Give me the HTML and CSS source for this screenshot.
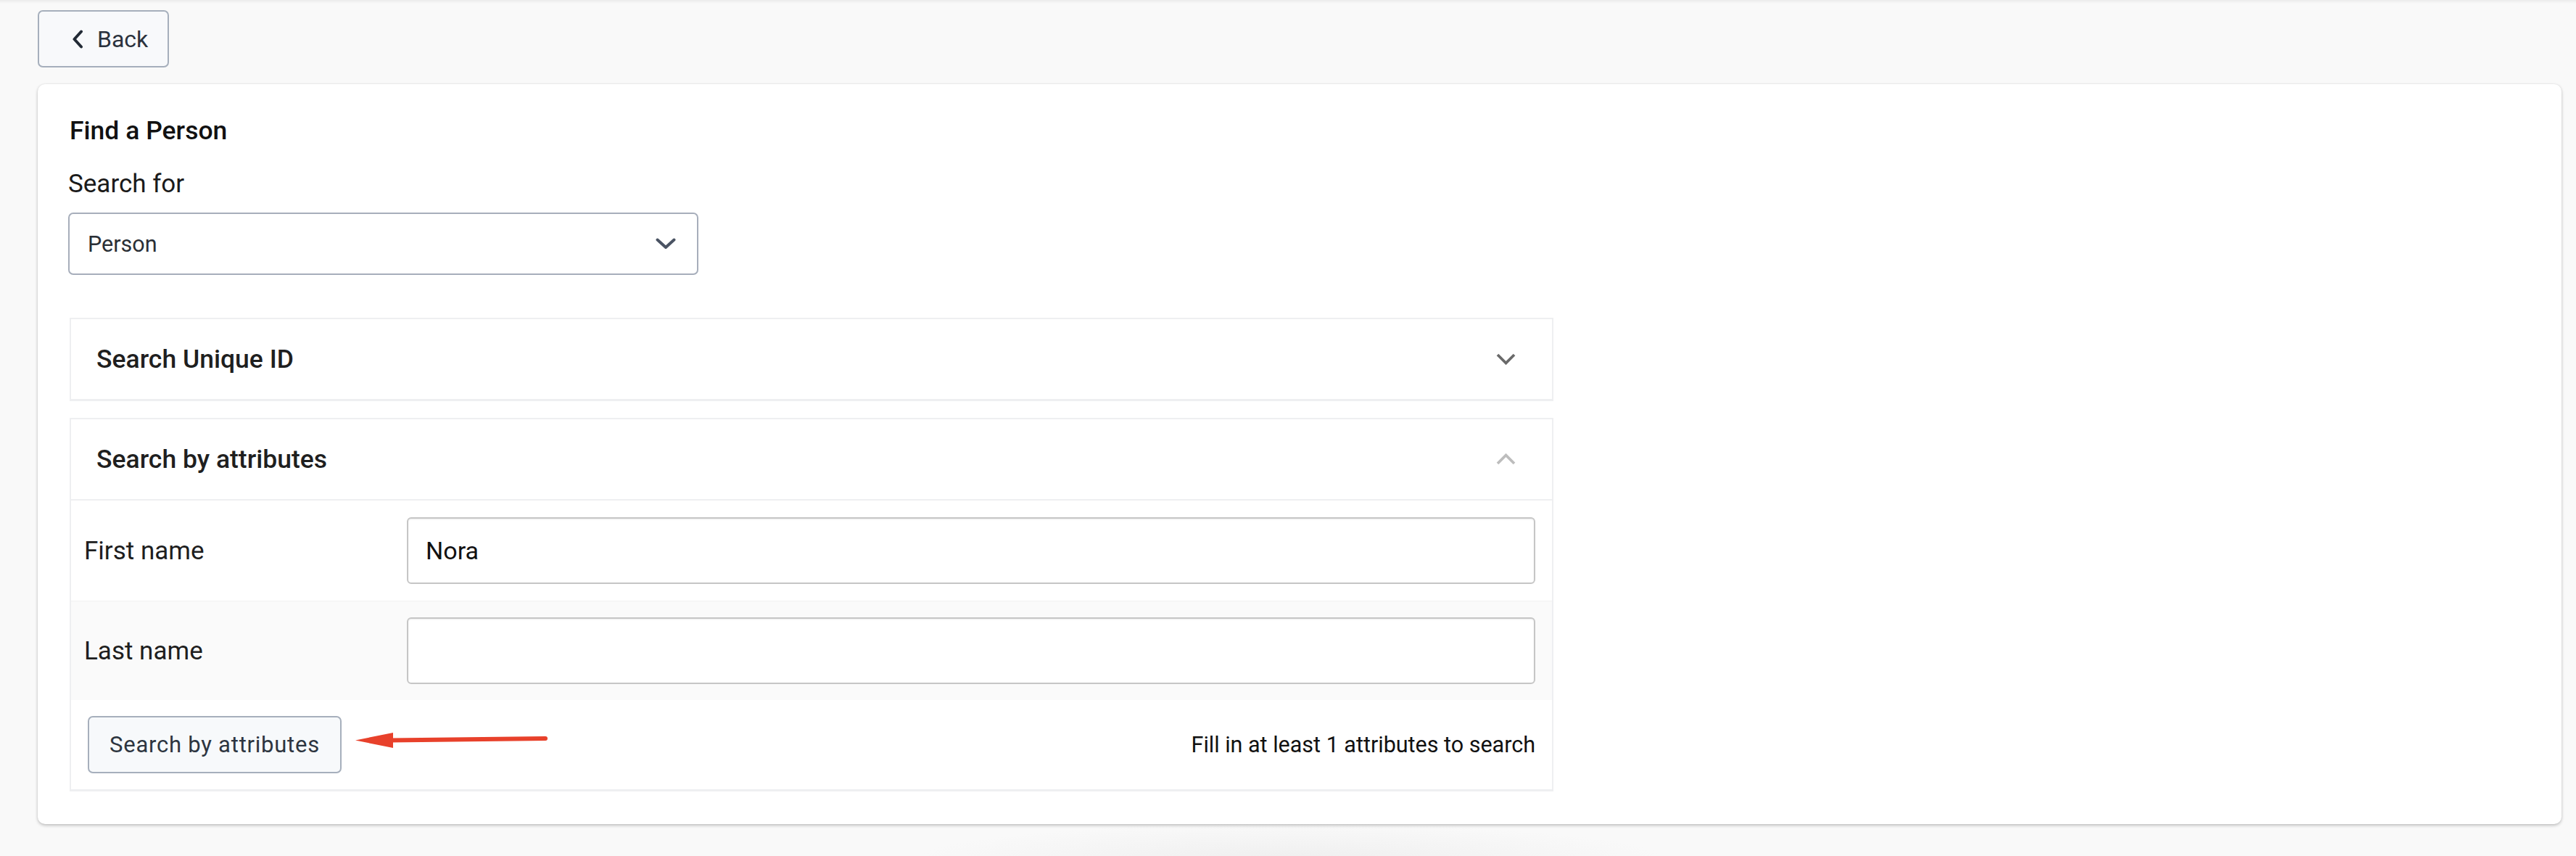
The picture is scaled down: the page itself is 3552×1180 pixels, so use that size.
FILE: index.html
```html
<!DOCTYPE html>
<html lang="en">
<head>
<meta charset="utf-8">
<title>Find a Person</title>
<link rel="stylesheet" href="styles.css">
</head>
<body>
<main class="page">
  <button class="back-btn" type="button">
    <svg class="back-icon" width="16" height="26" viewBox="0 0 16 26"><path d="M13 2.5 L3.5 13 L13 23.5" fill="none" stroke="#222a35" stroke-width="4" stroke-linecap="round" stroke-linejoin="round"/></svg>
    <span>Back</span>
  </button>

  <section class="card">
    <h1 class="card-title">Find a Person</h1>
    <div class="field-label">Search for</div>
    <div class="select">
      <span>Person</span>
      <svg width="28" height="16" viewBox="0 0 28 16"><path d="M2.5 2.5 L14 13 L25.5 2.5" fill="none" stroke="#4a5363" stroke-width="4" stroke-linecap="round" stroke-linejoin="round"/></svg>
    </div>

    <div class="panels">
      <div class="panel">
        <div class="panel-header">
          <span>Search Unique ID</span>
          <svg width="27" height="16" viewBox="0 0 27 16"><path d="M2 2 L13.5 13.5 L25 2" fill="none" stroke="#6a6a6a" stroke-width="3.8"/></svg>
        </div>
      </div>

      <div class="panel">
        <div class="panel-header open">
          <span>Search by attributes</span>
          <svg width="27" height="16" viewBox="0 0 27 16"><path d="M2 14 L13.5 2.5 L25 14" fill="none" stroke="#bdbdbd" stroke-width="3.8"/></svg>
        </div>
        <div class="attr-row">
          <span class="attr-label">First name</span>
          <div class="input">Nora</div>
        </div>
        <div class="attr-row alt">
          <span class="attr-label">Last name</span>
          <div class="input"></div>
        </div>
        <div class="panel-footer">
          <button class="search-btn" type="button">Search by attributes</button>
          <span class="hint">Fill in at least 1 attributes to search</span>
          <svg class="annot-arrow" width="270" height="30" viewBox="0 0 270 30"><line x1="50" y1="15.5" x2="264" y2="13" stroke="#e8412b" stroke-width="6" stroke-linecap="round"/><polygon points="2,15.5 54,5 54,26" fill="#e8412b"/></svg>
        </div>
      </div>
    </div>
  </section>
</main>
</body>
</html>
```
FILE: styles.css
```css
* { box-sizing: border-box; }

html, body {
  margin: 0;
  height: 100%;
}

body {
  font-family: Roboto, "Liberation Sans", sans-serif;
  color: #1d1d1d;
  background:
    radial-gradient(ellipse 520px 50px at 1780px 1185px, #efefef, rgba(249,249,249,0) 100%),
    linear-gradient(#ebebeb, #f9f9f9 5px);
  background-color: #f9f9f9;
}

.page {
  padding: 14px 20px 0 52px;
}

.back-btn {
  display: flex;
  align-items: center;
  gap: 19px;
  width: 181px;
  height: 79px;
  padding: 0 0 0 45px;
  border: 2px solid #a6afbc;
  border-radius: 7px;
  background: #f8f9fb;
  font-family: inherit;
  font-size: 32px;
  color: #2b323d;
  cursor: pointer;
}

.back-icon { flex: none; }

.card {
  margin-top: 23px;
  background: #fff;
  border-radius: 10px;
  box-shadow: 0 2px 4px rgba(0,0,0,0.22), 0 0 3px rgba(0,0,0,0.08);
  padding: 43px 46px 45px 42px;
}

.card-title {
  margin: 0;
  padding-left: 2px;
  font-size: 35.5px;
  font-weight: 500;
  line-height: 43px;
  color: #111;
}

.field-label {
  margin-top: 32px;
  font-size: 35px;
  line-height: 40px;
  color: #1a1a1a;
}

.select {
  margin-top: 19px;
  width: 869px;
  height: 86px;
  border: 2px solid #a7aebb;
  border-radius: 7px;
  display: flex;
  align-items: center;
  justify-content: space-between;
  padding: 0 29px 0 25px;
  font-size: 30.5px;
  color: #2a2f36;
}

.panels {
  margin-top: 59px;
  margin-left: 2px;
  width: 2046px;
  display: flex;
  flex-direction: column;
  gap: 23px;
}

.panel {
  border: 2px solid #eeeff1;
  border-bottom-width: 3px;
  background: #fff;
}

.panel-header {
  height: 110px;
  display: flex;
  align-items: center;
  justify-content: space-between;
  padding: 0 50px 0 35px;
  font-size: 35.5px;
  font-weight: 500;
  color: #1f1f1f;
}

.panel-header.open {
  border-bottom: 2px solid #eeeff1;
  height: 112px;
}

.attr-row {
  display: grid;
  grid-template-columns: 463px 1fr;
  align-items: center;
  height: 138px;
  padding-right: 23px;
}

.attr-row.alt {
  background: #fafafa;
  border-top: 1px solid #f1f1f1;
  height: 137px;
}

.attr-label {
  padding-left: 18px;
  font-size: 35px;
  color: #1e1e1e;
}

.input {
  height: 92px;
  border: 2px solid #c6c6c6;
  border-radius: 6px;
  background: #fff;
  box-shadow: inset 0 1px 2px rgba(0,0,0,0.08);
  display: flex;
  align-items: center;
  padding-left: 24px;
  font-size: 34px;
  color: #111;
}

.panel-footer {
  position: relative;
  height: 123px;
  display: flex;
  align-items: center;
  justify-content: space-between;
  padding: 0 23px;
}

.search-btn {
  width: 350px;
  height: 79px;
  border: 2px solid #a6afbc;
  border-radius: 7px;
  background: #f7f9fb;
  font-family: inherit;
  font-size: 31px;
  letter-spacing: 0.75px;
  color: #2d3540;
  cursor: pointer;
}

.hint {
  font-size: 30.5px;
  color: #111;
}

.annot-arrow {
  position: absolute;
  left: 390px;
  top: 40px;
}
```
